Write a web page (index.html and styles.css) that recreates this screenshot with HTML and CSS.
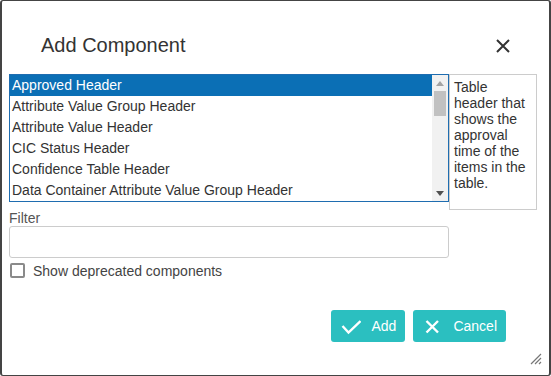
FILE: index.html
```html
<!DOCTYPE html>
<html lang="en">
<head>
  <meta charset="UTF-8" />
  <title>Add Component</title>
  <meta name="viewport" content="width=device-width, initial-scale=1.0" />
  <link rel="stylesheet" href="styles.css">
</head>
<body>

<div class="dialog">
  <div class="dialog-header">
    <h2>Add Component</h2>
    <button type="button" class="close-btn" aria-label="Close">
      <svg width="16" height="16" viewBox="0 0 16 16"><path d="M2 2L14 14M14 2L2 14" stroke="#333" stroke-width="2" fill="none"/></svg>
    </button>
  </div>

  <div class="picker">
    <div class="listbox">
      <div class="items">
        <div class="item selected">Approved Header</div>
        <div class="item">Attribute Value Group Header</div>
        <div class="item">Attribute Value Header</div>
        <div class="item">CIC Status Header</div>
        <div class="item">Confidence Table Header</div>
        <div class="item">Data Container Attribute Value Group Header</div>
      </div>
      <div class="scrollbar">
        <div class="arrow">
          <svg width="8" height="5" viewBox="0 0 8 5"><path d="M0 5L4 0L8 5Z" fill="#a3a3a3"/></svg>
        </div>
        <div class="thumb"></div>
        <div class="track"></div>
        <div class="arrow">
          <svg width="8" height="5" viewBox="0 0 8 5"><path d="M0 0L8 0L4 5Z" fill="#505050"/></svg>
        </div>
      </div>
    </div>
    <div class="description">Table header that shows the approval time of the items in the table.</div>
  </div>

  <label for="filter" class="filter-label">Filter</label>
  <input type="text" id="filter" class="filter-input" />

  <label class="check-row">
    <span class="checkbox"></span>
    Show deprecated components
  </label>

  <div class="btn-group">
    <button type="button" class="btn">
      <svg width="20" height="20" viewBox="0 0 20 20"><path d="M1.5 10L7.5 16.5L19.5 5" stroke="#fff" stroke-width="2.4" fill="none"/></svg>
      Add
    </button>
    <button type="button" class="btn">
      <svg width="20" height="20" viewBox="0 0 20 20"><path d="M3.5 5L15 16.5M15 5L3.5 16.5" stroke="#fff" stroke-width="2.4" fill="none"/></svg>
      Cancel
    </button>
  </div>

  <svg class="resize" width="12" height="12" viewBox="0 0 12 12">
    <path d="M1 11L11 1M5 11L11 5M9 11L11 9" stroke="#777" stroke-width="1.2" fill="none"/>
  </svg>
</div>

</body>
</html>
```

FILE: styles.css
```css
body {
  margin: 0;
  font-family: "Liberation Sans", Arial, sans-serif;
  font-size: 14px;
  color: #333;
  background: #fff;
}

.dialog {
  position: relative;
  width: 551px;
  height: 376px;
  box-sizing: border-box;
  border: 1px solid #444;
  border-left-width: 2px;
  border-right-width: 2px;
  border-radius: 3px;
  padding: 0 7px;
  display: flex;
  flex-direction: column;
  background: #fff;
}

.dialog-header {
  display: flex;
  align-items: center;
  justify-content: space-between;
  padding: 33px 31px 0 32px;
  margin-bottom: 17px;
}

h2 {
  margin: 0;
  font-size: 20px;
  font-weight: normal;
  line-height: 23px;
  color: #333;
}

.close-btn {
  background: none;
  border: none;
  padding: 0;
  width: 16px;
  height: 16px;
  display: flex;
  cursor: pointer;
}

.picker {
  display: flex;
  align-items: flex-start;
}

.listbox {
  width: 440px;
  height: 128px;
  box-sizing: border-box;
  border: 1px solid #1f6db0;
  display: flex;
}

.items {
  flex: 1;
  overflow: hidden;
}

.item {
  height: 21px;
  line-height: 21px;
  padding-left: 2px;
  white-space: nowrap;
  color: #333;
}

.item.selected {
  background: #0b6fb5;
  color: #fff;
}

.scrollbar {
  width: 16px;
  background: #f1f1f1;
  display: flex;
  flex-direction: column;
  align-items: center;
}

.arrow {
  height: 16px;
  display: flex;
  align-items: center;
  justify-content: center;
}

.thumb {
  width: 12px;
  height: 25px;
  background: #c1c1c1;
}

.track {
  flex: 1;
}

.description {
  width: 88px;
  height: 136px;
  box-sizing: border-box;
  border: 1px solid #ccc;
  padding: 4px 4px;
  line-height: 16px;
}

.filter-label {
  display: block;
  line-height: 16px;
  color: #555;
}

.filter-input {
  width: 440px;
  height: 32px;
  box-sizing: border-box;
  border: 1px solid #ccc;
  border-radius: 3px;
  font: inherit;
  padding: 0 6px;
  margin: 0;
}

.check-row {
  display: flex;
  align-items: center;
  gap: 8px;
  margin-top: 5px;
  height: 15px;
  padding-left: 1px;
  color: #444;
}

.checkbox {
  width: 15px;
  height: 15px;
  box-sizing: border-box;
  border: 2px solid #8a8a8a;
  border-radius: 2px;
}

.btn-group {
  display: flex;
  justify-content: flex-end;
  gap: 8px;
  margin-top: 32px;
  padding-right: 36px;
}

.btn {
  height: 32px;
  display: flex;
  align-items: center;
  gap: 10px;
  padding: 0 9px 0 10px;
  border: none;
  border-radius: 3px;
  background: #2bbfc0;
  color: #fff;
  font: inherit;
  cursor: pointer;
}

.resize {
  position: absolute;
  right: 7px;
  bottom: 10px;
}
```
